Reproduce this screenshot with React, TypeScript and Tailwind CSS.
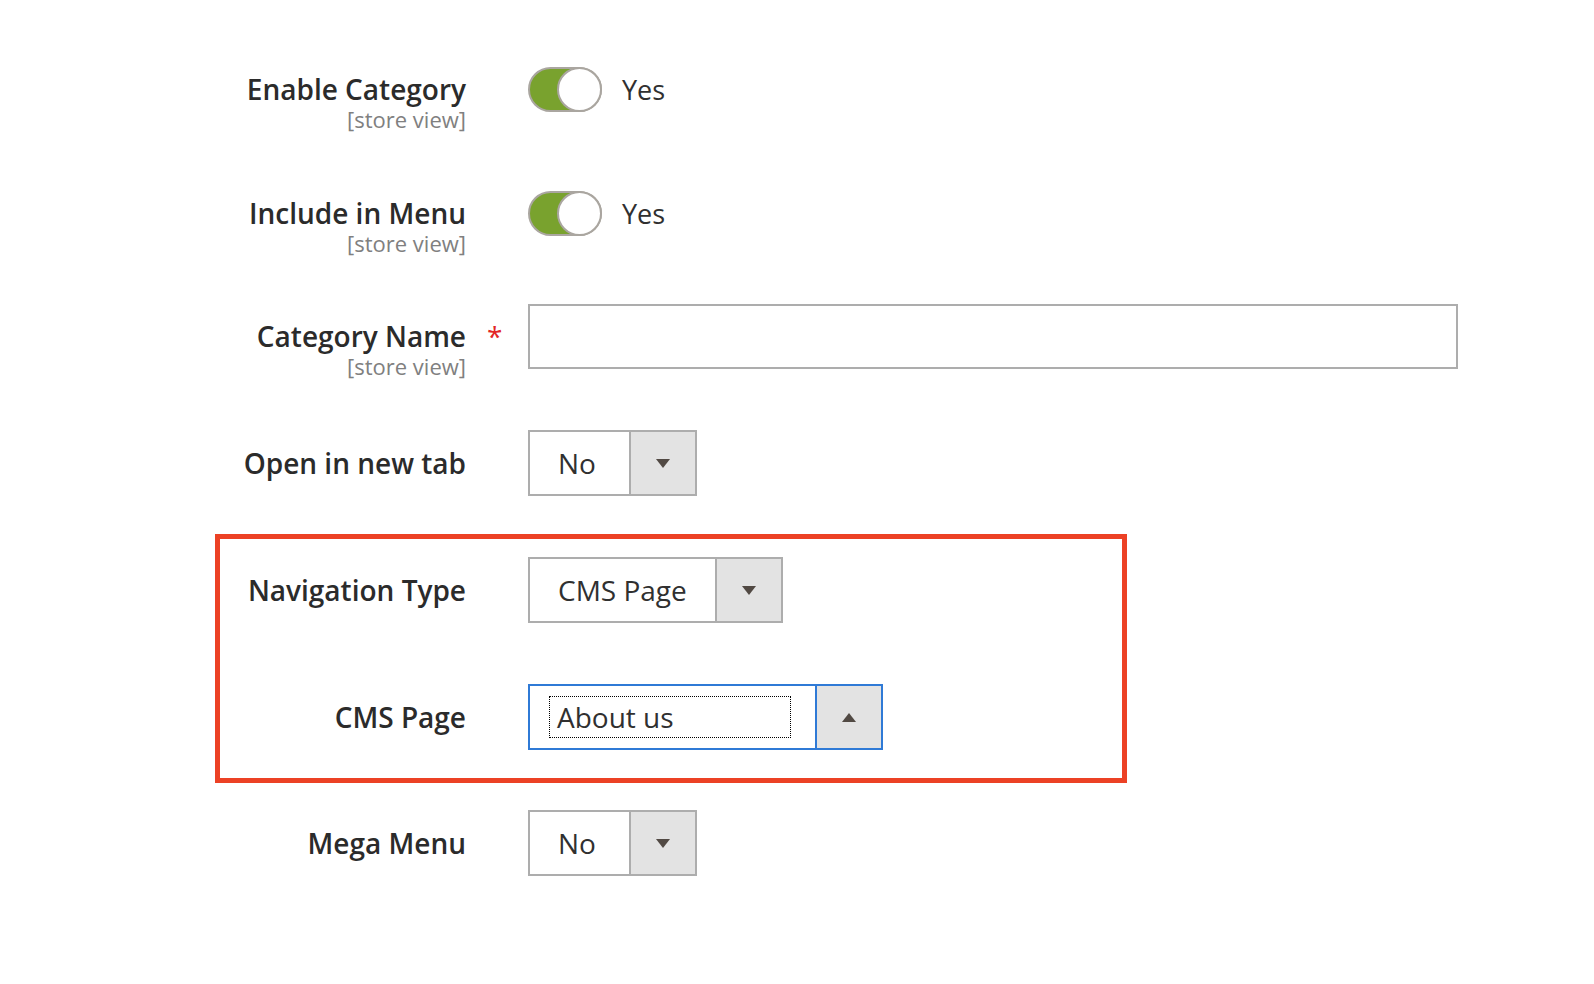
import React from 'react';

interface RowProps {
  label: string;
  labelW: string;
  labelMt: string;
  scope?: boolean;
  required?: boolean;
  className?: string;
  children: React.ReactNode;
}

function Row({ label, labelW, labelMt, scope, required, className, children }: RowProps) {
  return (
    <div className={`flex items-start ${className ?? ''}`}>
      <div className={`${labelW} shrink-0 text-right`}>
        <div className={`${labelMt} h-[36px] text-[28px] font-semibold leading-[36px] text-[#2b2b2b]`}>{label}</div>
        {scope && <div className="h-[24px] text-[22px] leading-[24px] text-[#808080]">[store view]</div>}
      </div>
      <div className="w-[62px] shrink-0">
        {required && (
          <div className={`${labelMt} h-[36px] pl-[21px] text-[28px] leading-[36px] text-[#e22626]`}>*</div>
        )}
      </div>
      {children}
    </div>
  );
}

function Toggle() {
  return (
    <div className="flex items-center">
      <div className="relative h-[45px] w-[74px] rounded-full border-2 border-[#aaa6a0] bg-[#79a22e]">
        {/* knob */}
        <div className="absolute right-[-2px] top-[-2px] h-[45px] w-[45px] rounded-full border-2 border-[#aaa6a0] bg-white"></div>
      </div>
      <span className="ml-[20px] text-[27px] leading-[36px] text-[#303030]">Yes</span>
    </div>
  );
}

function Caret({ up }: { up?: boolean }) {
  return (
    <svg width="14" height="9" viewBox="0 0 14 9">
      <path d={up ? 'M7 0 L14 9 L0 9 Z' : 'M0 0 L14 0 L7 9 Z'} fill="#514943" />
    </svg>
  );
}

function Select({ value, width, focused }: { value: string; width: string; focused?: boolean }) {
  return (
    <div
      className={`flex h-[66px] ${width} border-2 bg-white ${focused ? 'border-[#2f7ad6]' : 'border-[#adadad]'}`}
    >
      <div className="flex flex-1 items-center">
        {focused ? (
          <span className="ml-[19px] flex h-[42px] w-[242px] items-center border border-dotted border-black pl-[7px] text-[28px] text-[#303030]">
            {value}
          </span>
        ) : (
          <span className="pl-[28px] text-[28px] text-[#303030]">{value}</span>
        )}
      </div>
      <div
        className={`flex w-[66px] items-center justify-center border-l-2 bg-[#e3e3e3] ${focused ? 'border-[#2f7ad6]' : 'border-[#adadad]'}`}
      >
        <Caret up={focused} />
      </div>
    </div>
  );
}

export default function App() {
  return (
    <div className="h-[984px] w-full bg-white pt-[67px] font-['Open_Sans',sans-serif]">
      <Row label="Enable Category" labelW="w-[466px]" labelMt="mt-[4px]" scope className="h-[65px]">
        <Toggle />
      </Row>
      <Row label="Include in Menu" labelW="w-[466px]" labelMt="mt-[4px]" scope className="mt-[59px] h-[65px]">
        <Toggle />
      </Row>
      <Row label="Category Name" labelW="w-[466px]" labelMt="mt-[14px]" scope required className="mt-[48px]">
        <div className="h-[65px] w-[930px] border-2 border-[#adadad] bg-white"></div>
      </Row>
      <Row label="Open in new tab" labelW="w-[466px]" labelMt="mt-[15px]" className="mt-[52px]">
        <Select value="No" width="w-[169px]" />
      </Row>

      {/* highlighted block */}
      <div className="ml-[215px] mt-[38px] w-[912px] border-[5px] border-[#ec4125] pb-[28px] pt-[18px]">
        <Row label="Navigation Type" labelW="w-[246px]" labelMt="mt-[15px]">
          <Select value="CMS Page" width="w-[255px]" />
        </Row>
        <Row label="CMS Page" labelW="w-[246px]" labelMt="mt-[15px]" className="mt-[61px]">
          <Select value="About us" width="w-[355px]" focused />
        </Row>
      </div>

      <Row label="Mega Menu" labelW="w-[466px]" labelMt="mt-[15px]" className="mt-[27px]">
        <Select value="No" width="w-[169px]" />
      </Row>
    </div>
  );
}
